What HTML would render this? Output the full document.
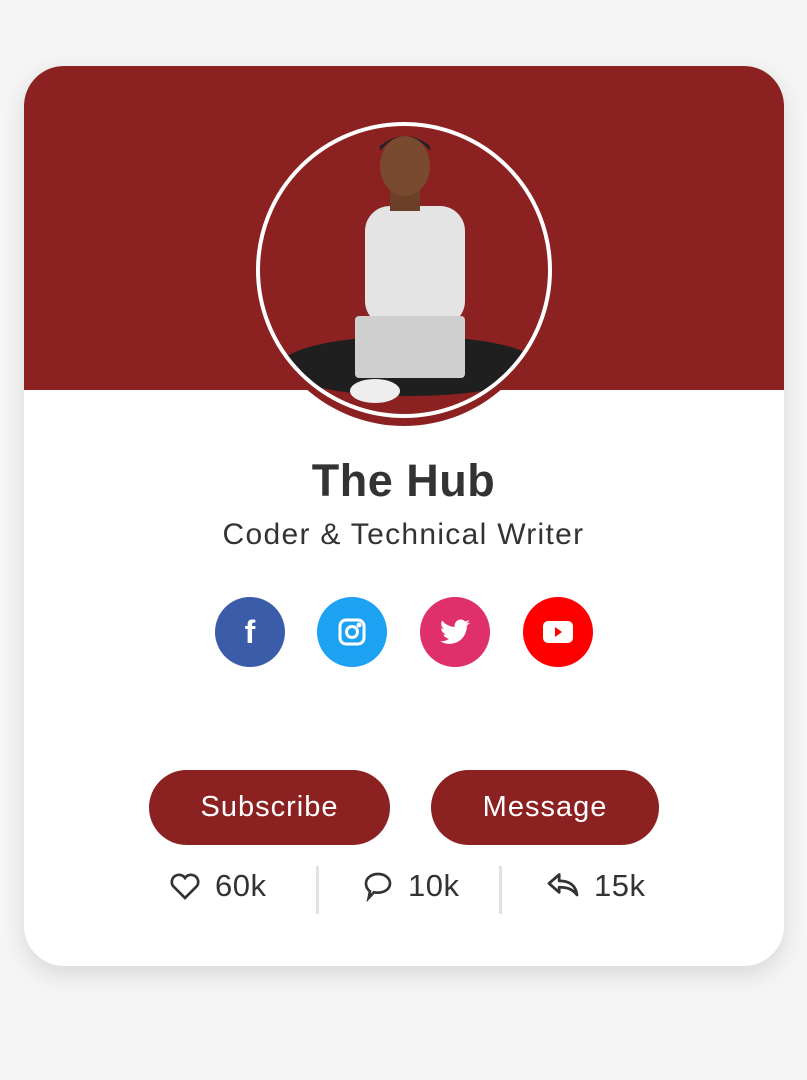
<!DOCTYPE html>
<html><head><meta charset="utf-8"><style>
body{margin:0;width:807px;height:1080px;background:#f5f5f5;font-family:"Liberation Sans",sans-serif;position:relative;overflow:hidden}
.card{position:absolute;left:24px;top:66px;width:760px;height:900px;background:#fff;border-radius:40px;overflow:hidden;box-shadow:0 8px 24px rgba(0,0,0,.12)}
.hdr{position:absolute;left:0;top:0;width:760px;height:324px;background:#8b2121}
.av{position:absolute;left:230px;top:54px;width:300px;height:306px;border-radius:50%;background:#8b2121}
.av2{position:absolute;left:232px;top:56px;width:296px;height:296px;border-radius:50%;border:4px solid #fff;background:#8b2121;overflow:hidden;box-sizing:border-box}
.t{position:absolute;left:0;width:807px;text-align:center;color:#333}
.s{position:absolute;top:597px;width:70px;height:70px;border-radius:50%;display:flex;align-items:center;justify-content:center}
.b{position:absolute;top:770px;height:75px;border-radius:38px;background:#8b2121;color:#fff;font-size:29px;letter-spacing:1px;display:flex;align-items:center;justify-content:center}
.st{position:absolute;top:868px;font-size:31px;color:#333;display:flex;align-items:center;gap:14px;letter-spacing:.5px}
.dv{position:absolute;top:866px;width:3px;height:48px;background:#e2e2e2}
</style></head><body>
<div class="card"><div class="hdr"></div>
<div class="av"></div>
<div class="av2">
<svg width="290" height="290" viewBox="0 0 290 290">
<ellipse cx="150" cy="240" rx="130" ry="30" fill="#1f1f1f"/>
<rect x="105" y="80" width="100" height="120" rx="25" fill="#e4e4e4"/>
<rect x="130" y="55" width="30" height="30" fill="#6b3f28"/>
<ellipse cx="145" cy="40" rx="25" ry="30" fill="#7a4a30"/>
<path d="M120 25 Q145 -5 170 25 L170 20 Q145 0 120 20Z" fill="#222"/>
<rect x="95" y="190" width="110" height="62" rx="4" fill="#cfcfcf"/>
<ellipse cx="115" cy="265" rx="25" ry="12" fill="#eee"/>
</svg></div>
</div>
<div class="t" style="top:455px;font-size:45px;font-weight:bold;color:#333;letter-spacing:.5px">The Hub</div>
<div class="t" style="top:518px;font-size:30px;letter-spacing:1.3px">Coder &amp; Technical Writer</div>
<div class="s" style="left:215px;background:#3b5ca8"><span style="color:#fff;font-weight:bold;font-size:32px">f</span></div>
<div class="s" style="left:317px;background:#1da1f2"><svg width="28" height="28" viewBox="0 0 28 28" fill="none" stroke="#fff" stroke-width="3"><rect x="2" y="2" width="24" height="24" rx="6"/><circle cx="14" cy="14" r="5.5"/><circle cx="21" cy="7" r="1" fill="#fff"/></svg></div>
<div class="s" style="left:420px;background:#e0306b"><svg width="30" height="26" viewBox="0 0 24 20"><path fill="#fff" d="M24 2.4a10 10 0 0 1-2.8.8A5 5 0 0 0 23.3.4a10 10 0 0 1-3.1 1.2A4.9 4.9 0 0 0 11.8 6 14 14 0 0 1 1.7.9a4.9 4.9 0 0 0 1.5 6.6A4.9 4.9 0 0 1 1 6.9a4.9 4.9 0 0 0 3.9 4.9 5 5 0 0 1-2.2.1 4.9 4.9 0 0 0 4.6 3.4A9.9 9.9 0 0 1 0 17.3 14 14 0 0 0 7.5 19.5c9 0 14-7.5 14-14v-.6A10 10 0 0 0 24 2.4z"/></svg></div>
<div class="s" style="left:523px;background:#ff0000"><svg width="32" height="24" viewBox="0 0 32 24"><rect x="1" y="1" width="30" height="22" rx="5" fill="#fff"/><path d="M13 7l7 5-7 5z" fill="#f00"/></svg></div>
<div class="b" style="left:149px;width:241px">Subscribe</div>
<div class="b" style="left:431px;width:228px">Message</div>
<div class="st" style="left:169px"><svg width="32" height="30" viewBox="0 0 24 22" fill="none" stroke="#333" stroke-width="2"><path d="M12 20L3 11a5 5 0 0 1 9-6 5 5 0 0 1 9 6z"/></svg>60k</div>
<div class="dv" style="left:316px"></div>
<div class="st" style="left:362px"><svg width="32" height="32" viewBox="0 0 24 24" fill="none" stroke="#333" stroke-width="2"><path d="M12 3c5 0 9 3 9 7s-4 7-9 7c-1 0-2 0-3-.3L5 21l1-5c-2-1.5-3-3.5-3-6 0-4 4-7 9-7z"/></svg>10k</div>
<div class="dv" style="left:499px"></div>
<div class="st" style="left:546px"><svg width="34" height="28" viewBox="0 0 26 22" fill="none" stroke="#333" stroke-width="2.2" stroke-linejoin="round"><path d="M10 2L2 9l8 7v-4c6 0 10 1 14 6-1-7-5-11-14-11z"/></svg>15k</div>
</body></html>
